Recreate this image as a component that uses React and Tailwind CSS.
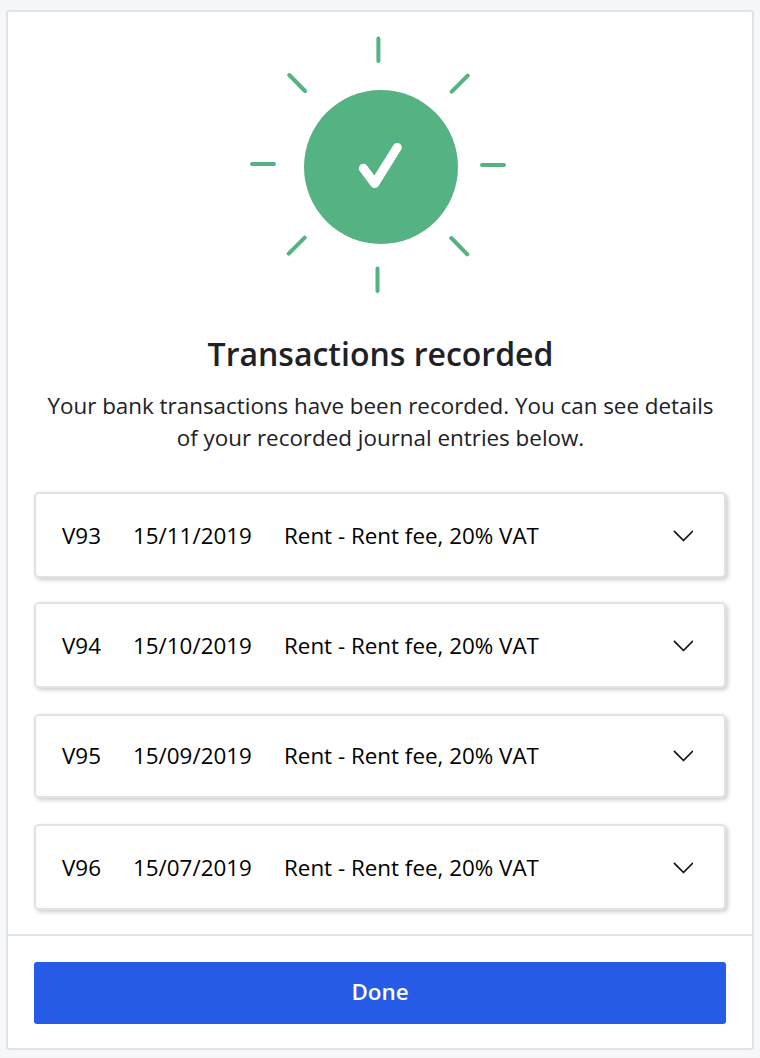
const entries = [
  { id: "V93", date: "15/11/2019", text: "Rent - Rent fee, 20% VAT", row: "mb-6 h-[86px] pt-0.5" },
  { id: "V94", date: "15/10/2019", text: "Rent - Rent fee, 20% VAT", row: "mb-[26px] h-[86px] pt-0.5" },
  { id: "V95", date: "15/09/2019", text: "Rent - Rent fee, 20% VAT", row: "mb-[26px] h-[84px] pb-px" },
  { id: "V96", date: "15/07/2019", text: "Rent - Rent fee, 20% VAT", row: "h-[86px] pt-0.5" },
];

function SuccessIcon() {
  return (
    <svg width="260" height="260" viewBox="0 0 260 260" className="mr-1" fill="none" aria-hidden="true">
      <circle cx="133" cy="132" r="77" fill="#55b283" />
      <path d="M115.300 133.300L126.700 148.500L149.300 112.400" stroke="#fff" strokeWidth="9" strokeLinecap="round" strokeLinejoin="round" />
      <path
        d="M130.400 3.500V26M129.500 233.500V256M4 129H26M234 130H256M41.300 40L57 56M219.700 40.700L203.700 56.700M40.700 218.700L56.700 202.700M203.300 203L219.300 219.300"
        stroke="#55b283"
        strokeWidth="4"
        strokeLinecap="round"
      />
    </svg>
  );
}

function Entry({ entry }) {
  return (
    <li
      className={`flex items-center rounded-[5px] border-2 border-[#dfe3e7] bg-white px-[26px] text-[22.4px] text-black shadow-[2px_2px_4px_rgba(0,0,0,0.2)] ${entry.row}`}
    >
      <span className="w-[71px]">{entry.id}</span>
      <span className="w-[151px]">{entry.date}</span>
      <span className="flex-1">{entry.text}</span>
      <svg width="20" height="12" viewBox="0 0 20 12" className="mr-[5px]" fill="none" aria-hidden="true">
        <path d="M1.400 1.300L10.500 10.500L19.600 1.300" stroke="#111" strokeWidth="1.700" strokeLinejoin="round" strokeLinecap="round" />
      </svg>
    </li>
  );
}

export default function App() {
  return (
    <div className="h-[1058px] bg-[#f5f7f9] px-1.5 pt-2.5 font-['Open_Sans','Noto_Sans',sans-serif] text-[#202126]">
      <main className="flex h-[1040px] flex-col rounded-[3px] border-2 border-[#dfe3e7] bg-white">
        <section className="flex flex-col items-center px-[26px] pt-[23px]">
          <SuccessIcon />
          <h1 className="mt-[39px] pl-px text-[32px] leading-10 font-semibold">Transactions recorded</h1>
          <p className="mt-4 pl-px text-center text-[22.4px] leading-8 whitespace-nowrap">
            Your bank transactions have been recorded. You can see details
            <br />
            of your recorded journal entries below.
          </p>
        </section>
        <ul className="mt-[38px] px-[26px]">
          {entries.map((entry) => (
            <Entry key={entry.id} entry={entry} />
          ))}
        </ul>
        <footer className="mt-6 border-t-2 border-[#dfe3e7] px-[26px] pt-[26px]">
          <button className="h-[62px] w-full rounded-[3px] bg-[#255be6] pb-[3px] text-[22.4px] font-semibold text-white">
            Done
          </button>
        </footer>
      </main>
    </div>
  );
}
